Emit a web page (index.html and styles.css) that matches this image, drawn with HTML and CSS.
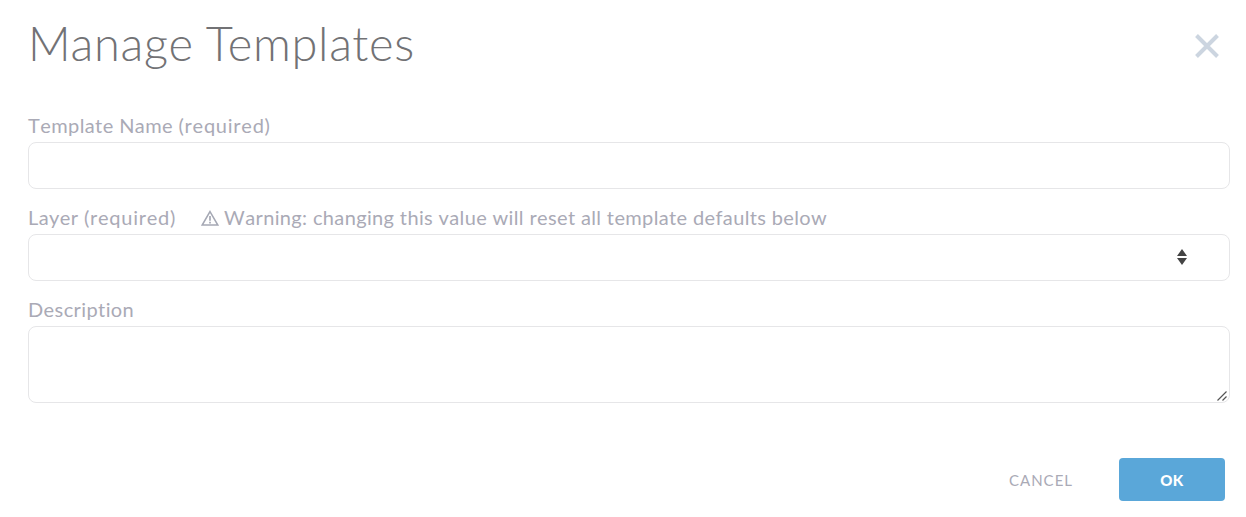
FILE: index.html
```html
<!DOCTYPE html>
<html lang="en">
<head>
    <meta charset="UTF-8">
    <meta name="viewport" content="width=device-width, initial-scale=1.0">
    <title>Manage Templates</title>
    <link rel="stylesheet" href="styles.css">
</head>
<body>
    <div class="modal">
        <div class="modal-header">
            <h1>Manage Templates</h1>
            <button class="close-btn" type="button" aria-label="Close">
                <svg width="26" height="26" viewBox="0 0 26 26">
                    <path d="M2.5 2.5 L23.5 23.5 M23.5 2.5 L2.5 23.5" stroke="#ccd5e0" stroke-width="4" fill="none"/>
                </svg>
            </button>
        </div>

        <form class="form">
            <label class="field-label" for="templateName">Template Name <span class="req">(required)</span></label>
            <input class="field-input" id="templateName" type="text">

            <label class="field-label" for="layer">
                Layer <span class="req">(required)</span>
                <span class="warning">
                    <svg width="18" height="16" viewBox="0 0 18 16">
                        <path d="M9 1.6 L16.8 15 H1.2 Z" stroke="#a5a8b4" stroke-width="1.5" fill="none"/>
                        <path d="M9 6 V10.8 M9 11.8 V13.4" stroke="#a5a8b4" stroke-width="1.7" fill="none"/>
                    </svg>
                    Warning: changing this value will reset all template defaults below
                </span>
            </label>
            <div class="select-wrap">
                <select class="field-input field-select" id="layer"></select>
                <svg class="select-arrows" width="10" height="16" viewBox="0 0 10 16">
                    <path d="M5 0 L10 7 H0 Z M0 9 H10 L5 16 Z" fill="#444"/>
                </svg>
            </div>

            <label class="field-label" for="description">Description</label>
            <div class="textarea-wrap">
                <textarea class="field-input field-textarea" id="description"></textarea>
                <svg class="resize-grip" width="10" height="10" viewBox="0 0 10 10">
                    <path d="M0.5 9.5 L9.5 0.5 M5.5 9.5 L9.5 5.5" stroke="#555" stroke-width="1.2" fill="none"/>
                </svg>
            </div>

            <div class="modal-footer">
                <button class="btn-cancel" type="button">CANCEL</button>
                <button class="btn-ok" type="button">OK</button>
            </div>
        </form>
    </div>
</body>
</html>
```

FILE: styles.css
```css
body {
    margin: 0;
    background: #fff;
    font-family: Lato, "Open Sans", sans-serif;
}

.modal {
    padding: 13px 16px 0 28px;
}

.modal-header {
    display: flex;
    justify-content: space-between;
    align-items: center;
    height: 60px;
}

.modal-header h1 {
    margin: 0;
    font-size: 47px;
    line-height: 60px;
    font-weight: 300;
    letter-spacing: 0.7px;
    color: #727275;
}

.close-btn {
    border: none;
    background: none;
    padding: 0;
    margin: 5px 10px 0 0;
    height: 26px;
}

.form {
    display: flex;
    flex-direction: column;
    margin-top: 41px;
}

.field-label {
    display: block;
    height: 28px;
    line-height: 22px;
    font-size: 20px;
    font-kerning: none;
    letter-spacing: 0.4px;
    color: #aaaab6;
}

.req {
    letter-spacing: 0.75px;
}

.warning {
    margin-left: 19px;
    letter-spacing: 0.36px;
}

.warning svg {
    vertical-align: -1px;
}

.field-input {
    display: block;
    box-sizing: border-box;
    width: 100%;
    height: 47px;
    margin: 0 0 17px;
    border: 1px solid #e6e6e8;
    border-radius: 8px;
    background: #fff;
    outline: none;
}

.select-wrap,
.textarea-wrap {
    position: relative;
}

.field-select {
    appearance: none;
}

.select-arrows {
    position: absolute;
    right: 43px;
    top: 15px;
}

.field-textarea {
    height: 77px;
    margin-bottom: 0;
    resize: none;
}

.resize-grip {
    position: absolute;
    right: 3px;
    bottom: 2px;
    pointer-events: none;
}

.modal-footer {
    display: flex;
    justify-content: flex-end;
    align-items: center;
    margin-top: 55px;
    padding-right: 5px;
}

.btn-cancel {
    border: none;
    background: none;
    padding: 0;
    margin-right: 46px;
    font-family: Lato, sans-serif;
    font-size: 15px;
    letter-spacing: 1px;
    color: #aaaab6;
}

.btn-ok {
    width: 106px;
    height: 43px;
    padding-right: 6px;
    border: none;
    border-radius: 4px;
    background: #5aa7d9;
    color: #fff;
    font-family: Lato, sans-serif;
    font-size: 15px;
    font-weight: 900;
    letter-spacing: 0.5px;
}
```
